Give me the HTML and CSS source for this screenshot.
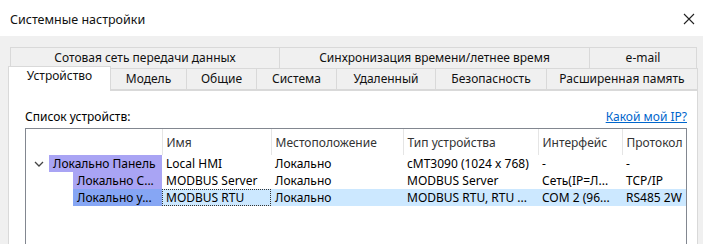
FILE: index.html
```html
<!DOCTYPE html>
<html lang="ru">
<head>
    <meta charset="UTF-8">
    <title>Системные настройки</title>
    <link rel="stylesheet" href="styles.css">
</head>
<body>
    <div class="titlebar">
        <span class="title">Системные настройки</span>
        <svg class="close" width="12" height="12" viewBox="0 0 12 12">
            <path d="M1 1 L11 11 M11 1 L1 11" stroke="#222" stroke-width="1.1" fill="none"/>
        </svg>
    </div>

    <div class="dialog">
        <div class="tab-row row-back">
            <div class="tab t-cell">Сотовая сеть передачи данных</div>
            <div class="tab t-sync">Синхронизация времени/летнее время</div>
            <div class="tab t-mail">e-mail</div>
        </div>
        <div class="tab-row row-front">
            <div class="tab t-dev active">Устройство</div>
            <div class="tab t-model">Модель</div>
            <div class="tab t-common">Общие</div>
            <div class="tab t-sys">Система</div>
            <div class="tab t-remote">Удаленный</div>
            <div class="tab t-sec">Безопасность</div>
            <div class="tab t-mem">Расширенная память</div>
        </div>

        <div class="panel">
            <div class="list-head">
                <span>Список устройств:</span>
                <a href="#" class="ip-link">Какой мой IP?</a>
            </div>

            <div class="listview">
                <table>
                    <colgroup>
                        <col class="c-tree"><col class="c-name"><col class="c-loc">
                        <col class="c-type"><col class="c-if"><col class="c-proto">
                    </colgroup>
                    <thead>
                        <tr>
                            <th></th>
                            <th>Имя</th>
                            <th>Местоположение</th>
                            <th>Тип устройства</th>
                            <th>Интерфейс</th>
                            <th>Протокол</th>
                        </tr>
                    </thead>
                    <tbody>
                        <tr>
                            <td class="tree">
                                <svg class="chev" width="10" height="6" viewBox="0 0 10 6">
                                    <path d="M1 1 L5 5 L9 1" stroke="#444" stroke-width="1.3" fill="none"/>
                                </svg>
                                <span class="node lvl0">Локально Панель</span>
                            </td>
                            <td>Local HMI</td>
                            <td>Локально</td>
                            <td>cMT3090 (1024 x 768)</td>
                            <td>-</td>
                            <td>-</td>
                        </tr>
                        <tr>
                            <td class="tree"><span class="node lvl1">Локально С...</span></td>
                            <td>MODBUS Server</td>
                            <td>Локально</td>
                            <td>MODBUS Server</td>
                            <td>Сеть(IP=Л...</td>
                            <td>TCP/IP</td>
                        </tr>
                        <tr class="selected">
                            <td class="tree"><span class="node lvl1 sel">Локально у...</span></td>
                            <td class="focus">MODBUS RTU</td>
                            <td>Локально</td>
                            <td>MODBUS RTU, RTU ...</td>
                            <td>COM 2 (96...</td>
                            <td>RS485 2W</td>
                        </tr>
                    </tbody>
                </table>
            </div>
        </div>
    </div>
</body>
</html>
```

FILE: styles.css
```css
body {
    margin: 0;
    width: 703px;
    height: 244px;
    overflow: hidden;
    font-family: "Noto Sans", "Open Sans", sans-serif;
    font-size: 12px;
    color: #000;
    background: #f0f0f0;
}

.titlebar {
    height: 36px;
    background: #fff;
    display: flex;
    align-items: center;
    justify-content: space-between;
    padding: 0 8px 0 10px;
}
.title {
    font-size: 12.5px;
    color: #111;
    margin-top: 2px;
}
.close {
    margin-top: 2px;
}

.dialog {
    padding-top: 11px;
}

/* Tabs */
.tab-row {
    display: flex;
}
.row-back {
    margin-left: 10px;
    height: 22px;
}
.row-front {
    margin-left: 8px;
    height: 21px;
    align-items: flex-end;
}
.tab {
    box-sizing: border-box;
    border: 1px solid #d9d9d9;
    border-left: none;
    background: #f0f0f0;
    text-align: center;
    line-height: 19px;
    white-space: nowrap;
    color: #111;
}
.row-back .tab {
    height: 22px;
    line-height: 20px;
    border-bottom: none;
}
.row-back .tab:first-child { border-left: 1px solid #d9d9d9; }
.row-front .tab {
    height: 22px;
    margin-top: -1px;
}
.row-front .tab.active {
    height: 25px;
    margin-top: -3px;
    background: #fff;
    border-left: 1px solid #d9d9d9;
    border-bottom: none;
    line-height: 18px;
    position: relative;
    z-index: 1;
    margin-bottom: -1px;
}

.t-cell { width: 270px; }
.t-sync { width: 310px; }
.t-mail { width: 107px; }
.t-dev { width: 103px; }
.t-model { width: 76px; }
.t-common { width: 70px; }
.t-sys { width: 80px; }
.t-remote { width: 99px; }
.t-sec { width: 111px; }
.t-mem { width: 151px; }

/* Page panel */
.panel {
    box-sizing: border-box;
    margin-left: 8px;
    width: 690px;
    height: 154px;
    overflow: hidden;
    background: #fff;
    border: 1px solid #d9d9d9;
    border-bottom: none;
    padding: 14px 10px 0 16px;
}

.list-head {
    display: flex;
    justify-content: space-between;
    align-items: center;
    height: 23px;
}
.ip-link {
    color: #0066cc;
    text-decoration: underline;
}

.listview {
    box-sizing: border-box;
    width: 662px;
    height: 130px;
    border: 1px solid #828790;
    border-bottom: none;
    overflow: hidden;
}

table {
    border-collapse: collapse;
    table-layout: fixed;
    width: 700px;
}
.c-tree { width: 136px; }
.c-name { width: 109px; }
.c-loc { width: 132px; }
.c-type { width: 135px; }
.c-if { width: 84px; }
.c-proto { width: 104px; }

th {
    height: 26px;
    padding: 0 0 0 4px;
    text-align: left;
    font-weight: normal;
    color: #333;
    border-right: 1px solid #e5e5e5;
    vertical-align: middle;
}
td {
    height: 17px;
    padding: 0 0 0 4px;
    white-space: nowrap;
    overflow: hidden;
    line-height: 17px;
}
td.tree {
    padding: 0;
    position: relative;
}
.chev {
    position: absolute;
    left: 8px;
    top: 6px;
}
.node {
    display: block;
    background: #a9a4f4;
    padding-left: 4px;
}
.lvl0 { margin-left: 23px; }
.lvl1 { margin-left: 47px; }
.node.sel { background: #86a6f4; }

tr.selected td { background: #cce8ff; }
tr.selected td.tree { background: #fff; }
td.focus {
    outline: 1px dotted #333;
    outline-offset: -1px;
}
```
